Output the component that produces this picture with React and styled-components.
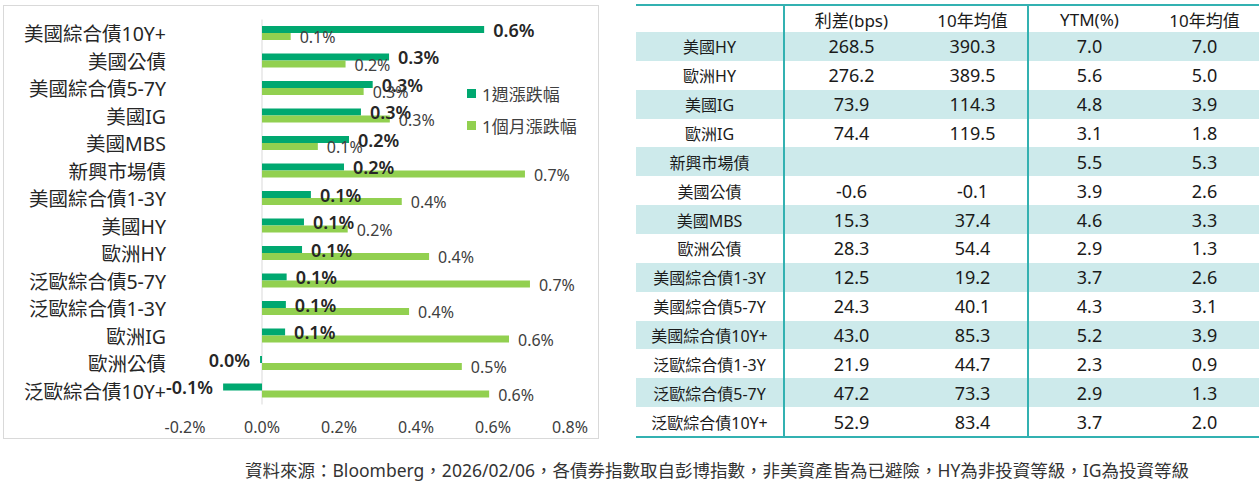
import React from 'react';
import styled, { createGlobalStyle } from 'styled-components';

const GlobalStyle = createGlobalStyle`
  body {
    margin: 0;
    background: #ffffff;
    font-family: "Noto Sans", "Noto Sans CJK TC", sans-serif;
    color: #1a1a1a;
  }
`;

const bonds = [
  { name: '美國綜合債10Y+', w: 0.577, wl: '0.6%', m: 0.0745, ml: '0.1%' },
  { name: '美國公債', w: 0.33, wl: '0.3%', m: 0.217, ml: '0.2%' },
  { name: '美國綜合債5-7Y', w: 0.2875, wl: '0.3%', m: 0.264, ml: '0.3%' },
  { name: '美國IG', w: 0.257, wl: '0.3%', m: 0.332, ml: '0.3%' },
  { name: '美國MBS', w: 0.226, wl: '0.2%', m: 0.145, ml: '0.1%' },
  { name: '新興市場債', w: 0.213, wl: '0.2%', m: 0.683, ml: '0.7%' },
  { name: '美國綜合債1-3Y', w: 0.127, wl: '0.1%', m: 0.363, ml: '0.4%' },
  { name: '美國HY', w: 0.109, wl: '0.1%', m: 0.2226, ml: '0.2%' },
  { name: '歐洲HY', w: 0.104, wl: '0.1%', m: 0.434, ml: '0.4%' },
  { name: '泛歐綜合債5-7Y', w: 0.064, wl: '0.1%', m: 0.696, ml: '0.7%' },
  { name: '泛歐綜合債1-3Y', w: 0.062, wl: '0.1%', m: 0.382, ml: '0.4%' },
  { name: '歐洲IG', w: 0.06, wl: '0.1%', m: 0.6416, ml: '0.6%' },
  { name: '歐洲公債', w: -0.005, wl: '0.0%', m: 0.519, ml: '0.5%' },
  { name: '泛歐綜合債10Y+', w: -0.101, wl: '-0.1%', m: 0.59, ml: '0.6%' },
];

const ticks = [-0.2, 0, 0.2, 0.4, 0.6, 0.8];

const tableHead = ['', '利差(bps)', '10年均值', 'YTM(%)', '10年均值'];
const tableRows = [
  ['美國HY', '268.5', '390.3', '7.0', '7.0'],
  ['歐洲HY', '276.2', '389.5', '5.6', '5.0'],
  ['美國IG', '73.9', '114.3', '4.8', '3.9'],
  ['歐洲IG', '74.4', '119.5', '3.1', '1.8'],
  ['新興市場債', '', '', '5.5', '5.3'],
  ['美國公債', '-0.6', '-0.1', '3.9', '2.6'],
  ['美國MBS', '15.3', '37.4', '4.6', '3.3'],
  ['歐洲公債', '28.3', '54.4', '2.9', '1.3'],
  ['美國綜合債1-3Y', '12.5', '19.2', '3.7', '2.6'],
  ['美國綜合債5-7Y', '24.3', '40.1', '4.3', '3.1'],
  ['美國綜合債10Y+', '43.0', '85.3', '5.2', '3.9'],
  ['泛歐綜合債1-3Y', '21.9', '44.7', '2.3', '0.9'],
  ['泛歐綜合債5-7Y', '47.2', '73.3', '2.9', '1.3'],
  ['泛歐綜合債10Y+', '52.9', '83.4', '3.7', '2.0'],
];

const WEEK = '#00a870';
const MONTH = '#92d050';
const ZERO = 96;
const SCALE = 385;
const ROW = 27.5;

const Page = styled.div`
  width: 1260px;
  height: 481px;
  display: flex;
  flex-direction: column;
  overflow: hidden;
`;

const TopRow = styled.div`
  display: flex;
  align-items: flex-start;
  gap: 37px;
  padding: 4px 1px 0 3px;
`;

const ChartCard = styled.div`
  position: relative;
  display: flex;
  width: 596px;
  height: 434px;
  margin-top: 1px;
  box-sizing: border-box;
  border: 1px solid #d9d9d9;
`;

const Categories = styled.div`
  width: 162px;
  flex: none;
  padding-top: 14.25px;
  display: flex;
  flex-direction: column;
`;

const Category = styled.div`
  height: ${ROW}px;
  line-height: ${ROW}px;
  text-align: right;
  white-space: nowrap;
  font-size: 19.5px;
  color: #262626;
`;

const Plot = styled.svg`
  display: block;
  flex: none;
  overflow: visible;
  font-family: "Noto Sans", "Noto Sans CJK TC", sans-serif;
`;

const Legend = styled.div`
  position: absolute;
  left: 463px;
  top: 71px;
  display: flex;
  flex-direction: column;
`;

const LegendItem = styled.div`
  display: flex;
  align-items: center;
  gap: 6px;
  height: 32px;
  font-size: 17px;
  color: #404040;
`;

const Swatch = styled.span`
  width: 9px;
  height: 9px;
  background: ${(p) => p.$color};
`;

const Table = styled.div`
  display: grid;
  grid-template-columns: 149px 133px 111px 121px 109px;
  grid-template-rows: 26px repeat(14, 28.86px);
  width: 623px;
  border-top: 2px solid #33b1b1;
  border-bottom: 2px solid #33b1b1;
`;

const Cell = styled.div`
  display: flex;
  align-items: center;
  justify-content: center;
  white-space: nowrap;
  box-sizing: border-box;
  background: ${(p) => (p.$stripe ? '#cdeaeb' : '#ffffff')};
  border-right: ${(p) => (p.$divider ? '2px solid #33b1b1' : 'none')};
  font-size: ${(p) => (p.$value ? '18px' : '16px')};
  color: #1a1a1a;
`;

const HeadCell = styled(Cell)`
  font-size: 17px;
  border-bottom: 2px solid #33b1b1;
  height: 28px;
`;

const Footer = styled.div`
  padding-left: 245px;
  margin-top: 19px;
  font-size: 17.5px;
  line-height: 24px;
  color: #333333;
  white-space: nowrap;
`;

const x = (v) => ZERO + v * SCALE;

function BarChart() {
  return (
    <Plot width="431" height="432" viewBox="0 0 431 432">
      <line x1={ZERO} y1="13.5" x2={ZERO} y2="398.5" stroke="#d9d9d9" strokeWidth="1" />
      {bonds.map((b, i) => {
        const c = 27 + i * ROW;
        const wx = Math.min(x(0), x(b.w));
        const ww = Math.abs(b.w) * SCALE;
        const neg = b.w < 0;
        return (
          <g key={b.name}>
            <rect x={wx} y={c - 7} width={ww} height="7" fill={WEEK} />
            <rect x={x(0)} y={c} width={b.m * SCALE} height="7" fill={MONTH} />
            <text
              x={neg ? wx - 10 : x(b.w) + 9}
              y={c - 3.5}
              textAnchor={neg ? 'end' : 'start'}
              dominantBaseline="central"
              fontSize="18"
              fontWeight="600"
              fill="#262626"
            >
              {b.wl}
            </text>
            <text
              x={x(b.m) + 9}
              y={c + 4}
              dominantBaseline="central"
              fontSize="16"
              fill="#404040"
            >
              {b.ml}
            </text>
          </g>
        );
      })}
      {ticks.map((t) => (
        <text
          key={t}
          x={x(t)}
          y="421"
          textAnchor="middle"
          dominantBaseline="central"
          fontSize="16"
          fill="#404040"
        >
          {t.toFixed(1)}%
        </text>
      ))}
    </Plot>
  );
}

export default function App() {
  return (
    <Page>
      <GlobalStyle />
      <TopRow>
        <ChartCard>
          <Categories>
            {bonds.map((b) => (
              <Category key={b.name}>{b.name}</Category>
            ))}
          </Categories>
          <BarChart />
          <Legend>
            <LegendItem>
              <Swatch $color={WEEK} />
              1週漲跌幅
            </LegendItem>
            <LegendItem>
              <Swatch $color={MONTH} />
              1個月漲跌幅
            </LegendItem>
          </Legend>
        </ChartCard>
        <Table>
          {tableHead.map((h, j) => (
            <HeadCell key={j} $divider={j === 0 || j === 2}>
              {h}
            </HeadCell>
          ))}
          {tableRows.map((row, i) =>
            row.map((v, j) => (
              <Cell
                key={`${i}-${j}`}
                $stripe={i % 2 === 0}
                $divider={j === 0 || j === 2}
                $value={j > 0}
              >
                {v}
              </Cell>
            ))
          )}
        </Table>
      </TopRow>
      <Footer>
        資料來源：Bloomberg，2026/02/06，各債券指數取自彭博指數，非美資產皆為已避險，HY為非投資等級，IG為投資等級
      </Footer>
    </Page>
  );
}
